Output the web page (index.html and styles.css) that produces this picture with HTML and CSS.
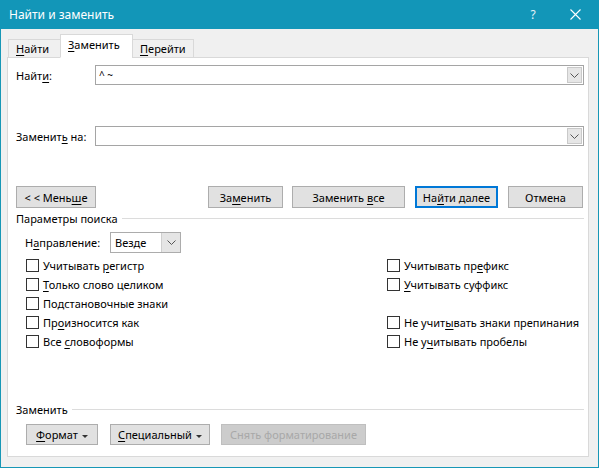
FILE: index.html
```html
<!DOCTYPE html>
<html lang="ru">
<head>
    <meta charset="UTF-8">
    <title>Найти и заменить</title>
    <link rel="stylesheet" href="styles.css">
</head>
<body>

    <div class="window">
        <!-- Title bar -->
        <div class="titlebar">
            <span class="title">Найти и заменить</span>
            <span class="help">?</span>
            <span class="close">
                <svg width="11" height="11" viewBox="0 0 11 11"><path d="M0.5 0.5 L10.5 10.5 M10.5 0.5 L0.5 10.5" stroke="#fff" stroke-width="1.1" fill="none"/></svg>
            </span>
        </div>

        <!-- Tabs -->
        <div class="tabs">
            <div class="tab"><span><u>Н</u>айти</span></div>
            <div class="tab active"><span><u>З</u>аменить</span></div>
            <div class="tab"><span><u>П</u>ерейти</span></div>
        </div>

        <div class="panel">
            <div class="field-row">
                <span class="field-label">Найт<u>и</u>:</span>
                <div class="combo">
                    <span class="combo-text">^ ~</span>
                    <div class="combo-btn">
                        <svg width="9" height="5" viewBox="0 0 9 5"><path d="M0.5 0.5 L4.5 4.5 L8.5 0.5" stroke="#555" fill="none"/></svg>
                    </div>
                </div>
            </div>

            <div class="field-row replace-row">
                <span class="field-label">Заменит<u>ь</u> на:</span>
                <div class="combo">
                    <span class="combo-text"></span>
                    <div class="combo-btn">
                        <svg width="9" height="5" viewBox="0 0 9 5"><path d="M0.5 0.5 L4.5 4.5 L8.5 0.5" stroke="#555" fill="none"/></svg>
                    </div>
                </div>
            </div>

            <div class="button-row">
                <button class="btn btn-less">&lt; &lt; Мень<u>ш</u>е</button>
                <button class="btn btn-replace">За<u>м</u>енить</button>
                <button class="btn btn-replace-all">Заменить <u>в</u>се</button>
                <button class="btn btn-next default">На<u>й</u>ти далее</button>
                <button class="btn btn-cancel">Отмена</button>
            </div>

            <div class="group-title">
                <span>Параметры поиска</span>
                <div class="group-line"></div>
            </div>

            <div class="direction-row">
                <span class="direction-label">Н<u>а</u>правление:</span>
                <div class="select">
                    <span class="select-text">Везде</span>
                    <div class="select-btn">
                        <svg width="9" height="5" viewBox="0 0 9 5"><path d="M0.5 0.5 L4.5 4.5 L8.5 0.5" stroke="#555" fill="none"/></svg>
                    </div>
                </div>
            </div>

            <div class="options">
                <div class="check"><span class="box"></span><span>Учитывать <u>р</u>егистр</span></div>
                <div class="check"><span class="box"></span><span>Учитывать пр<u>е</u>фикс</span></div>
                <div class="check"><span class="box"></span><span><u>Т</u>олько слово целиком</span></div>
                <div class="check"><span class="box"></span><span><u>У</u>читывать суффикс</span></div>
                <div class="check"><span class="box"></span><span>Подстановочные знаки</span></div>
                <div class="check empty"></div>
                <div class="check"><span class="box"></span><span>Пр<u>о</u>износится как</span></div>
                <div class="check"><span class="box"></span><span>Не учит<u>ы</u>вать знаки препинания</span></div>
                <div class="check"><span class="box"></span><span>Все <u>с</u>ловоформы</span></div>
                <div class="check"><span class="box"></span><span>Не у<u>ч</u>итывать пробелы</span></div>
            </div>

            <div class="group-title replace-title">
                <span>Заменить</span>
                <div class="group-line"></div>
            </div>

            <div class="bottom-row">
                <button class="btn small btn-format"><u>Ф</u>ормат<span class="caret"></span></button>
                <button class="btn small btn-special"><u>С</u>пециальный<span class="caret"></span></button>
                <button class="btn small btn-clear" disabled>Снять форматирование</button>
            </div>
        </div>
    </div>

</body>
</html>
```

FILE: styles.css
```css
/* Page */
body {
    margin: 0;
    background: #fff;
}

u {
    text-decoration: underline;
    text-underline-offset: 2px;
}

/* Dialog window */
.window {
    width: 599px;
    height: 468px;
    box-sizing: border-box;
    border: 1px solid #1797b6;
    border-top: none;
    background: #f0f0f0;
    font-family: "Noto Sans", sans-serif;
    font-size: 11px;
    color: #000;
}

.titlebar {
    height: 29px;
    margin: 0 -1px;
    background: #1296b8;
    color: #fff;
    display: flex;
    align-items: center;
}

.title {
    flex: 1;
    padding-left: 9px;
    font-size: 12px;
}

.help {
    font-size: 12px;
    width: 40px;
    text-align: center;
    color: #e6f3f8;
}

.close {
    width: 44px;
    display: flex;
    justify-content: center;
    padding-right: 2px;
}

/* Tabs */
.tabs {
    display: flex;
    align-items: flex-end;
    height: 24px;
    margin-top: 5px;
    margin-bottom: -1px;
    padding-left: 7px;
    position: relative;
}

.tab {
    box-sizing: border-box;
    height: 19px;
    line-height: 17px;
    padding: 0 7px;
    border: 1px solid #d9d9d9;
    background: #f0f0f0;
}

.tab:first-child {
    width: 53px;
}

.tab:last-child {
    width: 62px;
    margin-left: -1px;
}

.tab.active {
    width: 73px;
    height: 24px;
    line-height: 20px;
    margin-left: -1px;
    border-bottom-color: #fff;
    background: #fff;
}

/* Main panel */
.panel {
    margin-left: 6px;
    width: 582px;
    height: 400px;
    box-sizing: border-box;
    border: 1px solid #d9d9d9;
    background: #fff;
    padding: 7px 4px 0 8px;
}

.field-row {
    display: flex;
    align-items: center;
    height: 20px;
}

.replace-row {
    margin-top: 41px;
}

.field-label {
    width: 79px;
}

.combo {
    flex: 1;
    height: 20px;
    box-sizing: border-box;
    border: 1px solid #a5a5a5;
    display: flex;
    align-items: center;
}

.combo-text {
    flex: 1;
    padding-left: 3px;
    font-size: 10px;
}

.combo-btn {
    width: 15px;
    height: 16px;
    margin-right: 1px;
    box-sizing: border-box;
    border: 1px solid #c9c9c9;
    background: #e6e6e6;
    display: flex;
    align-items: center;
    justify-content: center;
}

/* Buttons */
.btn {
    box-sizing: border-box;
    height: 22px;
    padding: 0;
    border: 1px solid #adadad;
    background: #e1e1e1;
    font-family: "Noto Sans", sans-serif;
    font-size: 11px;
    color: #000;
}

.btn.default {
    border: 2px solid #0078d7;
}

.button-row {
    display: flex;
    margin-top: 40px;
}

.btn-less {
    width: 80px;
}

.btn-replace {
    width: 75px;
    margin-left: 112px;
}

.btn-replace-all {
    width: 113px;
    margin-left: 9px;
}

.btn-next {
    width: 83px;
    margin-left: 10px;
}

.btn-cancel {
    width: 75px;
    margin-left: 10px;
}

/* Group headings */
.group-title {
    display: flex;
    align-items: center;
    height: 16px;
    margin-top: 2px;
}

.group-line {
    flex: 1;
    margin-left: 4px;
    border-top: 1px solid #dcdcdc;
}

.replace-title {
    margin-top: 50px;
}

/* Direction */
.direction-row {
    display: flex;
    align-items: center;
    height: 21px;
    margin-top: 6px;
    padding-left: 9px;
}

.direction-label {
    width: 85px;
}

.select {
    width: 71px;
    height: 21px;
    box-sizing: border-box;
    border: 1px solid #acacac;
    display: flex;
    align-items: center;
}

.select-text {
    flex: 1;
    padding-left: 4px;
}

.select-btn {
    width: 18px;
    height: 19px;
    background: #e5e5e5;
    border-left: 1px solid #cfcfcf;
    display: flex;
    align-items: center;
    justify-content: center;
}

/* Checkboxes */
.options {
    display: grid;
    grid-template-columns: 361px 1fr;
    grid-auto-rows: 19px;
    margin-top: 3px;
    padding-left: 10px;
}

.check {
    display: flex;
    align-items: center;
    white-space: nowrap;
}

.box {
    width: 13px;
    height: 13px;
    box-sizing: border-box;
    border: 1px solid #333;
    background: #fff;
    margin-right: 4px;
}

/* Bottom buttons */
.bottom-row {
    display: flex;
    margin-top: 7px;
    padding-left: 10px;
}

.btn.small {
    height: 21px;
}

.btn-format {
    width: 72px;
}

.btn-special {
    width: 100px;
    margin-left: 12px;
}

.btn-clear {
    width: 145px;
    margin-left: 11px;
    background: #cccccc;
    border-color: #bfbfbf;
    color: #a8a8a8;
}

.caret {
    display: inline-block;
    vertical-align: middle;
    margin-left: 4px;
    border-left: 3px solid transparent;
    border-right: 3px solid transparent;
    border-top: 3px solid #333;
}
```
